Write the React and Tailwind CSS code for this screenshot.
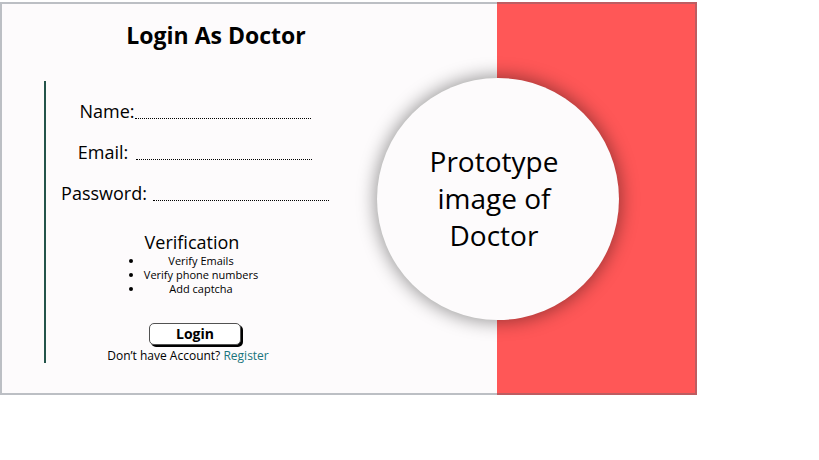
const fields = [
  { id: "name", label: "Name:", type: "text", gap: "gap-0" },
  { id: "email", label: "Email:", type: "email", gap: "gap-2" },
  { id: "password", label: "Password:", type: "password", gap: "gap-1.5" },
];

const checks = ["Verify Emails", "Verify phone numbers", "Add captcha"];

function Field({ id, label, type, gap }) {
  return (
    <div className={`flex items-start ${gap}`}>
      <label htmlFor={id} className="text-lg leading-6">
        {label}
      </label>
      <input
        id={id}
        type={type}
        className="h-5 w-44 border-b border-dotted border-black bg-transparent text-sm outline-none"
      />
    </div>
  );
}

export default function App() {
  return (
    <div className="min-h-screen bg-white pt-0.5 font-['Open_Sans','Noto_Sans',sans-serif] text-black">
      <main className="relative flex w-[85.1%] bg-[#fdfbfc]">
        <section className="flex-1 pt-4 pb-8 pl-11">
          <h1 className="w-86 text-center text-[23px] leading-[34px] font-bold">Login As Doctor</h1>
          <form
            className="mt-[29px] flex w-75 flex-col items-center border-l-2 border-[#24544a] pt-[18px]"
            onSubmit={(e) => e.preventDefault()}
          >
            <div className="flex flex-col items-center gap-[17px]">
              {fields.map((f) => (
                <Field key={f.id} {...f} />
              ))}
            </div>
            <h2 className="mt-[25px] pr-1.5 text-lg leading-6">Verification</h2>
            <ul className="list-disc pl-3 text-center text-[11px] leading-[14px]">
              {checks.map((c) => (
                <li key={c}>{c}</li>
              ))}
            </ul>
            <button
              type="submit"
              className="mt-[27px] h-[22px] w-23 rounded-[5px] border border-neutral-600 bg-white text-sm leading-5 font-bold shadow-[2px_2px_0_#000]"
            >
              Login
            </button>
            <p className="mt-1 pr-3.5 text-xs leading-[14px]">
              Don’t have Account?{" "}
              <a href="#register" className="text-[#19757c]">
                Register
              </a>
            </p>
          </form>
        </section>
        <aside className="relative flex w-50 items-center bg-[#ff5757]">
          <div className="absolute left-px flex size-[242px] -translate-x-1/2 items-center justify-center rounded-full bg-[#fdfbfc] shadow-[0_0_18px_2px_rgba(0,0,0,0.4)]">
            <p className="w-40 pr-2 text-center text-[28px] leading-[37px]">Prototype image of Doctor</p>
          </div>
        </aside>
        <div className="pointer-events-none absolute inset-0 border-2 border-[#5b6670]/40" />
      </main>
    </div>
  );
}
